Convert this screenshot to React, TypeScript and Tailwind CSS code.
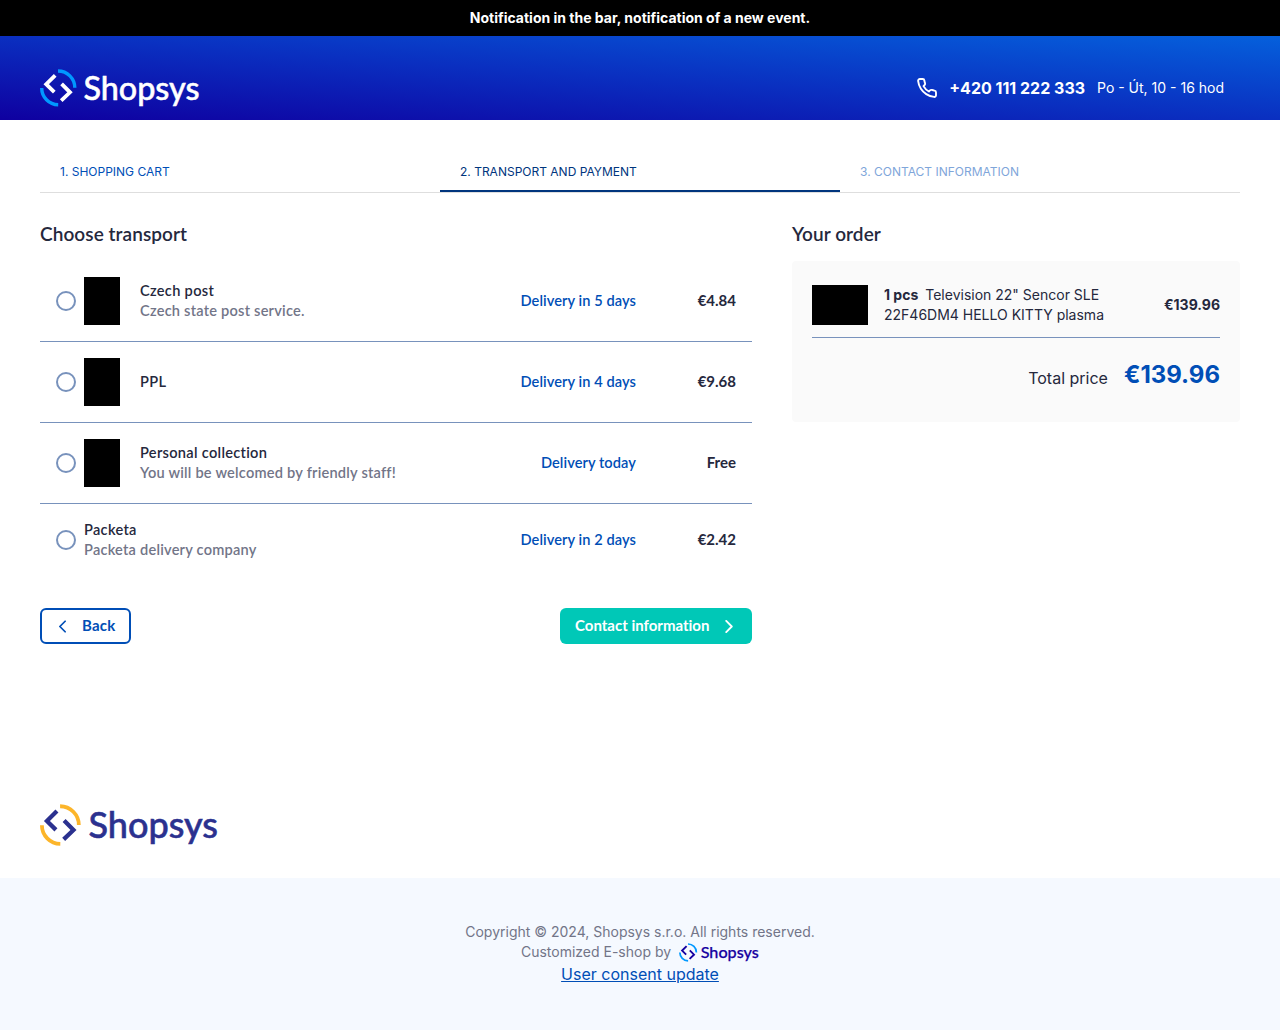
import React from "react";

const heading = "font-[Lato,sans-serif] font-semibold";

type LogoProps = { className: string; arc: string; ink: string };

function Logo({ className, arc, ink }: LogoProps) {
  return (
    <svg viewBox="0 0 160 38" className={`overflow-visible ${className}`} fill="none" aria-label="Shopsys">
      <path d="M18 2A16.8 16.8 0 0 1 34.8 18.8" stroke={arc} strokeWidth="3.4" />
      <path d="M1.7 19A16.8 16.8 0 0 0 18.2 35.8" stroke={arc} strokeWidth="3.4" />
      <path d="M15.2 6.3L6.2 15.2L14.3 23.2" stroke={ink} strokeWidth="3.8" />
      <path d="M21.6 14.9L30 23.3L21.2 31.7" stroke={ink} strokeWidth="3.8" />
      <text
        x="43.4"
        y="30.6"
        fill={ink}
        stroke={ink}
        strokeWidth="0.5"
        fontFamily="Lato, sans-serif"
        fontWeight="500"
        fontSize="32"
        textLength="116.2"
        lengthAdjust="spacingAndGlyphs"
      >
        Shopsys
      </text>
    </svg>
  );
}

type Transport = {
  name: string;
  note?: string;
  delivery: string;
  price: string;
  image: boolean;
};

const transports: Transport[] = [
  { name: "Czech post", note: "Czech state post service.", delivery: "Delivery in 5 days", price: "€4.84", image: true },
  { name: "PPL", delivery: "Delivery in 4 days", price: "€9.68", image: true },
  { name: "Personal collection", note: "You will be welcomed by friendly staff!", delivery: "Delivery today", price: "Free", image: true },
  { name: "Packeta", note: "Packeta delivery company", delivery: "Delivery in 2 days", price: "€2.42", image: false },
];

function TransportRow({ item }: { item: Transport }) {
  return (
    <li className="flex items-center border-b border-[#7892bc] px-4 py-4 text-[14.6px] leading-5 last:border-b-0">
      <span className="mr-2 size-5 shrink-0 rounded-full border-2 border-[#7892bc] bg-white" />
      {item.image && <span className="mr-5 h-12 w-9 shrink-0 bg-black" />}
      <div className={`flex-1 ${heading}`}>
        <div className="tracking-[0.3px]">{item.name}</div>
        {item.note && <div className="tracking-[0.22px] text-[#727588]">{item.note}</div>}
      </div>
      <div className={`tracking-[0.08px] text-[#004eb6] ${heading}`}>{item.delivery}</div>
      <div className="w-[100px] pb-0.5 text-right font-[Lato,sans-serif] text-[15px] font-bold">{item.price}</div>
    </li>
  );
}

export default function App() {
  return (
    <div className="flex h-[1030px] flex-col bg-white font-[Inter,sans-serif] text-[#25283d]">
      <div className="h-9 bg-black text-center text-sm leading-9 font-bold text-white">
        Notification in the bar, notification of a new event.
      </div>
      <header className="flex h-[84px] items-start justify-between bg-[linear-gradient(to_top_right,#0f00a0_0%,#0a2fc0_50%,#0560dc_100%)] pr-14 pl-10 text-white">
        <Logo className="mt-[33px] h-[38px] w-40" arc="#0098ff" ink="#ffffff" />
        <div className="mt-10 flex h-6 items-center">
          <svg viewBox="0 0 24 24" className="mr-[10px] size-6" fill="none" stroke="currentColor" strokeWidth="2.1" strokeLinejoin="round">
            <path d="M22 16.92v3a2 2 0 0 1-2.18 2 19.8 19.8 0 0 1-8.63-3.07 19.5 19.5 0 0 1-6-6 19.8 19.8 0 0 1-3.07-8.67A2 2 0 0 1 4.11 2h3a2 2 0 0 1 2 1.72c.13.96.36 1.9.7 2.81a2 2 0 0 1-.45 2.11L8.09 9.91a16 16 0 0 0 6 6l1.27-1.27a2 2 0 0 1 2.11-.45c.91.34 1.85.57 2.81.7A2 2 0 0 1 22 16.92z" transform="translate(1.2 1.2) scale(.9)" />
          </svg>
          <span className="mr-3 font-bold">+420 111 222 333</span>
          <span className="text-sm">Po - Út, 10 - 16 hod</span>
        </div>
      </header>

      <nav className="mx-10 mt-[31px] grid h-[42px] grid-cols-3 border-b border-[#dedede] text-xs uppercase">
        <span className="px-5 pt-[13px] leading-4 text-[#004eb6]">1. Shopping cart</span>
        <span className="border-b-2 border-[#00357d] px-5 pt-[13px] leading-4 text-[#00357d]">2. Transport and payment</span>
        <span className="px-5 pt-[13px] leading-4 text-[#7fa6da]">3. Contact information</span>
      </nav>

      <main className="mx-10 mt-7 flex h-[583px] gap-10">
        <section className="w-[712px]">
          <h2 className={`h-7 text-[19px] leading-[26px] tracking-[0.07px] ${heading}`}>Choose transport</h2>
          <ul className="mt-3">
            {transports.map((t) => <TransportRow key={t.name} item={t} />)}
          </ul>
          <div className="mt-8 flex justify-between font-[Lato,sans-serif] text-[15px] font-bold [font-variant-ligatures:none]">
            <button className="flex h-9 w-[91px] items-center rounded-md border-2 border-[#004eb6] pl-[17px] text-[#004eb6]">
              <svg viewBox="0 0 8 14" className="mr-4 h-[13px] w-[7px]" fill="none" stroke="currentColor" strokeWidth="2" strokeLinecap="round" strokeLinejoin="round"><path d="M7 1L1 7l6 6" /></svg>
              <span className="pb-0.5 tracking-[0.2px]">Back</span>
            </button>
            <button className="flex h-9 w-48 items-center rounded-md bg-[#00c8b7] pl-[15px] text-white">
              <span className="w-[135px] pb-0.5 text-left whitespace-nowrap">Contact information</span>
              <svg viewBox="0 0 8 14" className="ml-[15px] h-[13px] w-2" fill="none" stroke="currentColor" strokeWidth="2" strokeLinecap="round" strokeLinejoin="round"><path d="M1 1l6 6-6 6" /></svg>
            </button>
          </div>
        </section>

        <aside className="w-[448px]">
          <h2 className={`h-7 text-[19px] leading-[26px] tracking-[0.07px] ${heading}`}>Your order</h2>
          <div className="mt-3 h-[161px] rounded bg-[#fafafa] px-5 pt-6">
            <div className="flex items-center border-b border-[#7892bc] pb-3 text-sm leading-5">
              <span className="mr-4 h-10 w-14 bg-black" />
              <div className="w-[240px]">
                <div className="flex gap-[7px]"><b>1 pcs</b><span>Television 22" Sencor SLE</span></div>
                <div>22F46DM4 HELLO KITTY plasma</div>
              </div>
              <b className="ml-auto">€139.96</b>
            </div>
            <div className="mt-5 flex justify-end">
              <span className="mt-2 mr-4 leading-6">Total price</span>
              <strong className="text-2xl leading-[34px] text-[#004eb6]">€139.96</strong>
            </div>
          </div>
        </aside>
      </main>

      <div className="h-[74px] px-10">
        <Logo className="h-[42.4px] w-[178.5px]" arc="#fcb52a" ink="#2b318f" />
      </div>

      <footer className="flex flex-1 flex-col items-center bg-[#f5f9ff] pt-11 text-sm leading-5 text-[#727588]">
        <p>Copyright © 2024, Shopsys s.r.o. All rights reserved.</p>
        <p className="flex items-center">
          <span className="mr-2">Customized E-shop by</span>
          <Logo className="h-[19px] w-20" arc="#0098ff" ink="#1500a0" />
        </p>
        <a className="text-base leading-6 text-[#004eb6] underline">User consent update</a>
      </footer>
    </div>
  );
}
